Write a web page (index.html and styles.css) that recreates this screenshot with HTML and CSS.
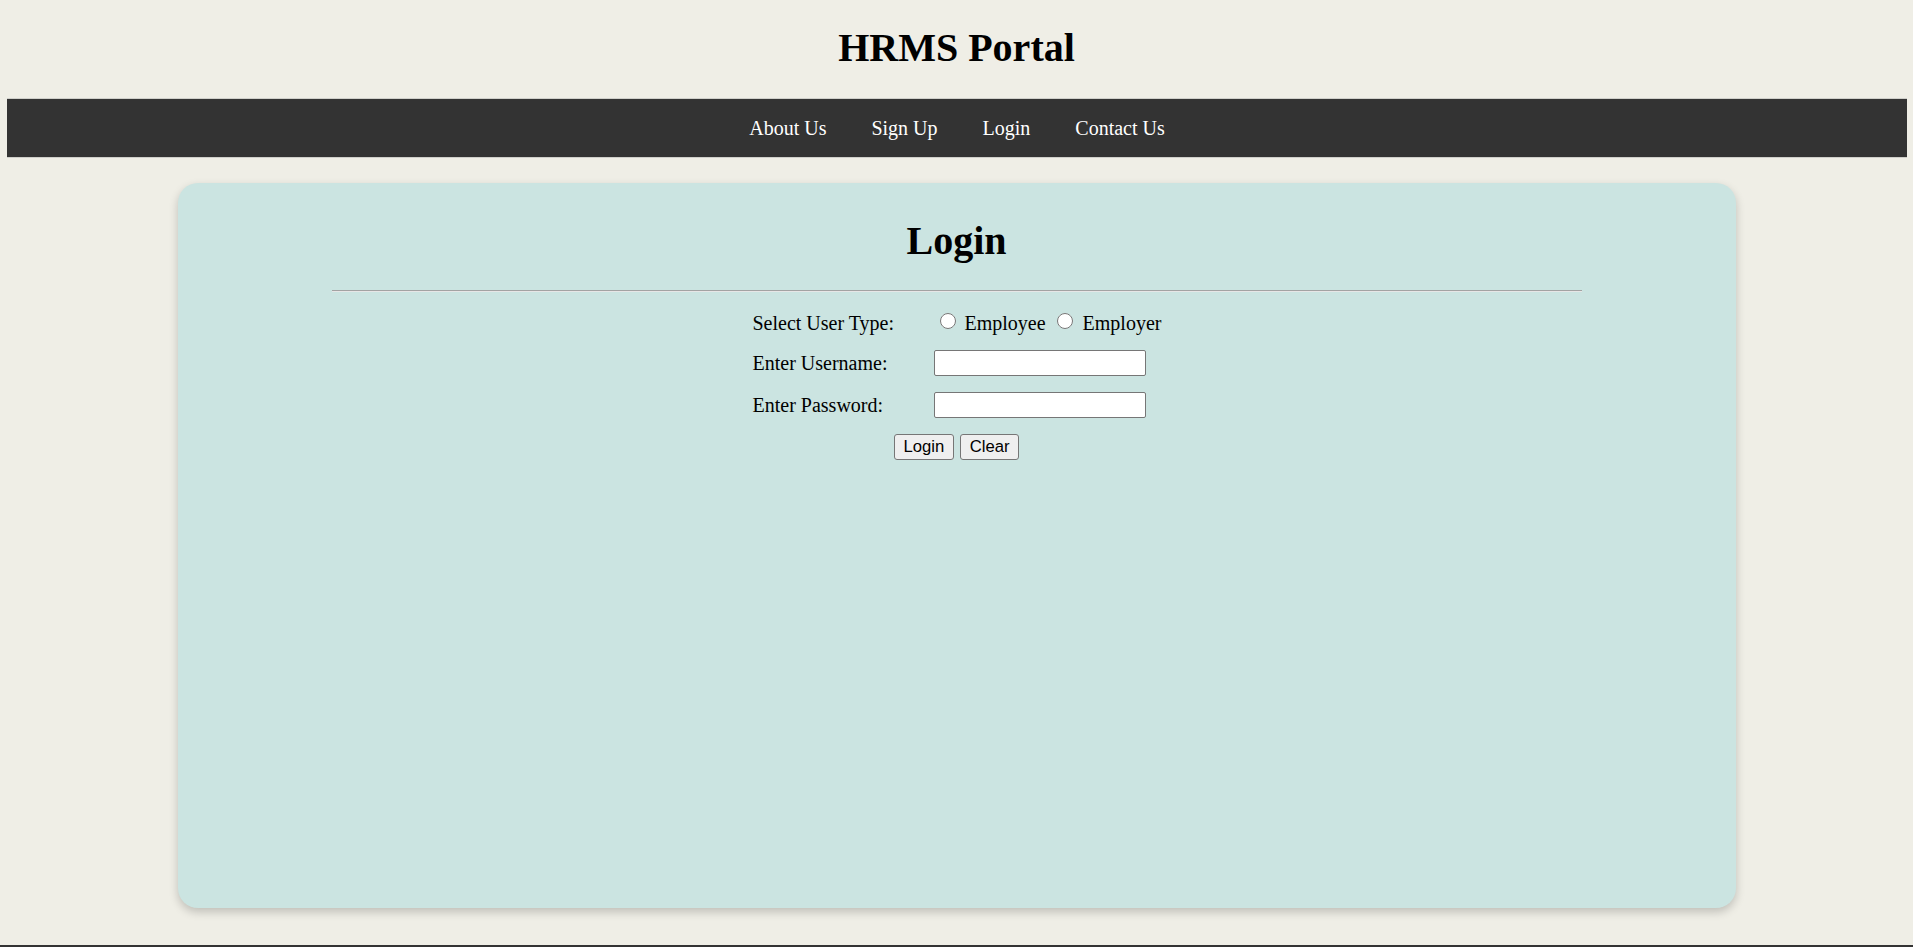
FILE: index.html
```html
<!DOCTYPE html>
<html lang="en">
<head>
<meta charset="utf-8">
<title>HRMS Portal - Login</title>
<link rel="stylesheet" href="styles.css">
</head>
<body>
<header class="site-header">
  <h1 class="site-title">HRMS Portal</h1>
</header>
<nav class="main-nav">
  <a href="#" class="nav-link">About Us</a>
  <a href="#" class="nav-link">Sign Up</a>
  <a href="#" class="nav-link">Login</a>
  <a href="#" class="nav-link">Contact Us</a>
</nav>
<main class="card">
  <h2 class="card-title">Login</h2>
  <hr class="divider">
  <form class="login-form">
    <div class="label type-label">Select User Type:</div>
    <div class="radio-cell">
      <input type="radio" name="utype" id="emp" class="radio first">
      <label for="emp" class="radio-text">Employee</label>
      <input type="radio" name="utype" id="empr" class="radio second">
      <label for="empr" class="radio-text">Employer</label>
    </div>
    <div class="label">Enter Username:</div>
    <div class="field-cell"><input type="text" class="text-input"></div>
    <div class="label">Enter Password:</div>
    <div class="field-cell"><input type="password" class="text-input"></div>
    <div class="buttons">
      <button type="button" class="btn">Login</button>
      <button type="reset" class="btn">Clear</button>
    </div>
  </form>
</main>
<footer class="site-footer"></footer>
</body>
</html>
```
FILE: styles.css
```css
html, body {
  margin: 0;
  padding: 0;
}
body {
  background: #efeee6;
  font-family: "Liberation Serif", "Times New Roman", serif;
  color: #000;
}
.site-header {
  padding-top: 25px;
  padding-bottom: 27px;
}
.site-title {
  margin: 0;
  font-size: 40px;
  font-weight: bold;
  text-align: center;
  line-height: 46px;
}
.main-nav {
  margin: 0 6px 0 7px;
  height: 58px;
  background: #333333;
  border-top: 1px solid #cfcfca;
  border-bottom: 1px solid #cfcfca;
  display: flex;
  justify-content: center;
  align-items: center;
  gap: 45px;
}
.nav-link {
  color: #ffffff;
  text-decoration: none;
  font-size: 20px;
  line-height: 23px;
}
.card {
  display: block;
  width: 1558px;
  height: 725px;
  box-sizing: border-box;
  margin: 25px auto 0;
  padding-top: 35px;
  background: #cbe4e1;
  border-radius: 20px;
  box-shadow: 0 4px 10px rgba(0, 0, 0, 0.2);
}
.card-title {
  margin: 0;
  font-size: 40px;
  font-weight: bold;
  text-align: center;
  line-height: 46px;
}
.divider {
  width: 1250px;
  box-sizing: border-box;
  margin: 26px auto 16px;
  border: 0;
  border-top: 1px solid #a3a3a3;
  border-bottom: 1px solid #e6e6e6;
  height: 2px;
}
.login-form {
  display: grid;
  grid-template-columns: 181px 227px;
  grid-auto-rows: 26.4px;
  row-gap: 15.6px;
  justify-content: center;
  align-items: center;
  font-size: 20px;
}
.label {
  line-height: 23px;
}
.type-label {
  padding-top: 4px;
}
.radio-cell {
  display: flex;
  align-items: center;
  line-height: 23px;
  white-space: nowrap;
}
.radio-text {
  padding-top: 4px;
}
.radio {
  width: 16px;
  height: 16px;
  margin: 0;
  flex: none;
}
.radio.first {
  margin: 0 9px 0 6px;
}
.radio.second {
  margin: 0 10px 0 11px;
}
.field-cell {
  display: flex;
  align-items: center;
}
.text-input {
  width: 212px;
  height: 26px;
  box-sizing: border-box;
  margin: 0;
  padding: 1px 2px;
  border: 1px solid #767676;
  border-radius: 2px;
  background: #fff;
  font-family: "Liberation Sans", Arial, sans-serif;
  font-size: 16px;
}
.buttons {
  grid-column: 1 / span 2;
  display: flex;
  justify-content: center;
  gap: 6px;
}
.btn {
  height: 26.4px;
  box-sizing: border-box;
  margin: 0;
  padding: 0 8.7px;
  border: 1px solid #767676;
  border-radius: 3px;
  background: #efefef;
  color: #000;
  font-family: "Liberation Sans", Arial, sans-serif;
  font-size: 16.67px;
  line-height: 20px;
}
.site-footer {
  margin-top: 37px;
  height: 40px;
  background: #333333;
}
```
